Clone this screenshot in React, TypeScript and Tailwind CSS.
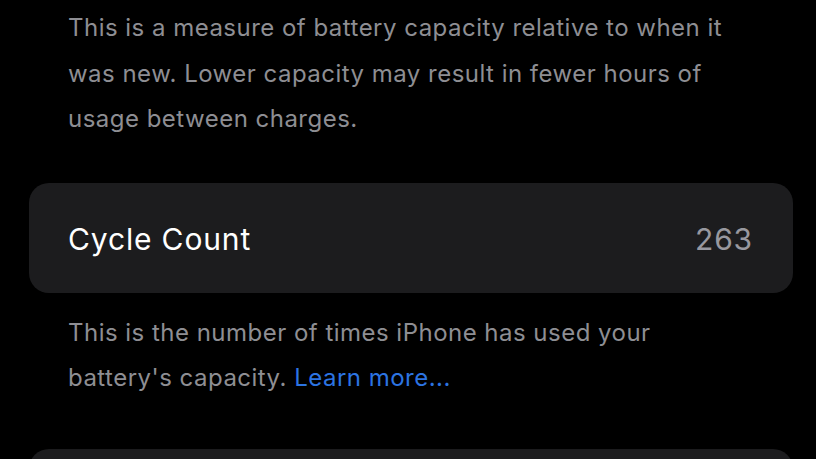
export default function App() {
  return (
    <div
      className="min-h-[459px] w-[816px] overflow-hidden bg-black"
      style={{ fontFamily: 'Inter, "Noto Sans", sans-serif' }}
    >
      {/* Maximum Capacity footer */}
      <p className="pl-[68px] pr-[80px] pt-[5px] text-[24px] leading-[45.5px] tracking-[0.48px] text-[#8e8e93]">
        This is a measure of battery capacity relative to when it was new. Lower capacity may result in fewer hours of
        usage between charges.
      </p>

      {/* Cycle Count cell */}
      <div className="ml-[29px] mr-[23px] mt-[41px] flex h-[110px] items-center justify-between rounded-[20px] bg-[#1c1c1e] pl-[39px] pr-[40px] pt-[3px]">
        <span className="text-[30px] tracking-[0.85px] text-white">Cycle Count</span>
        <span className="text-[30px] tracking-[0.85px] text-[#98989f]">263</span>
      </div>

      <p className="mt-[17px] pl-[68px] pr-[80px] text-[24px] leading-[45.5px] tracking-[0.48px] text-[#8e8e93]">
        This is the number of times iPhone has used your battery's capacity.{' '}
        <a className="text-[#2c74e2]">Learn more...</a>
      </p>

      {/* next cell, cut off */}
      <div className="ml-[29px] mr-[23px] mt-[48px] h-[80px] rounded-t-[20px] bg-[#1c1c1e]" />
    </div>
  );
}
